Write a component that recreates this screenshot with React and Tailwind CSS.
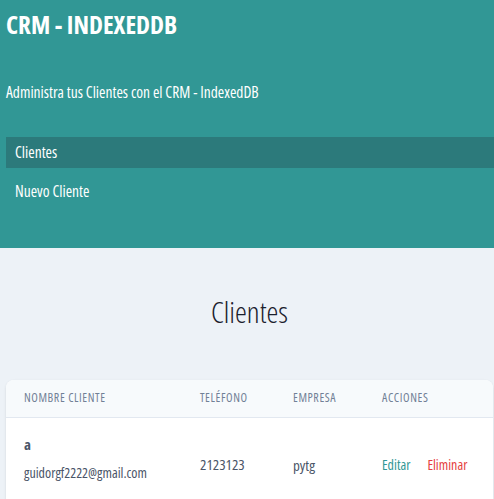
export default function App() {
  return (
    <div className="min-h-[499px] bg-[#edf2f7] font-['Open_Sans',sans-serif] [font-stretch:75%] text-[#2d3748]">
      <aside className="bg-[#319795] pl-[6px] pt-[10px] h-[248px]">
        <h1 className="text-[25px] font-bold text-white leading-[28px]">CRM - INDEXEDDB</h1>
        <p className="mt-[45px] text-[15.5px] text-white leading-[18px]">Administra tus Clientes con el CRM - IndexedDB</p>
        <nav className="mt-[36px] flex flex-col">
          <a className="h-[31px] flex items-center bg-[#2c7a7b] pl-[9px] text-[15.5px] text-white">Clientes</a>
          <a className="h-[31px] mt-[8px] flex items-center pl-[9px] text-[15.5px] text-white">Nuevo Cliente</a>
        </nav>
      </aside>
      <main className="pl-[6px] pr-[1px]">
        <h2 className="text-center text-[30px] font-light leading-[36px] mt-[46px] text-[#1a202c]">Clientes</h2>
        <div className="mt-[50px] bg-white rounded-t-lg shadow-sm overflow-hidden">
          <table className="w-full text-left">
            <thead>
              <tr className="bg-[#f7fafc] h-[37px] border-b border-[#e2e8f0] text-[12px] uppercase tracking-wider text-[#718096]">
                <th className="font-normal pl-[18px] w-[194px]">Nombre Cliente</th>
                <th className="font-normal w-[93px]">Teléfono</th>
                <th className="font-normal w-[89px]">Empresa</th>
                <th className="font-normal">Acciones</th>
              </tr>
            </thead>
            <tbody>
              <tr className="h-[82px] align-top">
                <td className="pl-[18px] pt-[17px]">
                  <p className="text-[15px] font-bold text-[#4a5568] leading-[18px]">a</p>
                  <p className="mt-[11px] text-[14px] text-[#4a5568] leading-[18px]">guidorgf2222@gmail.com</p>
                </td>
                <td className="pt-[36px] text-[15px] leading-[20px] text-[#4a5568]">2123123</td>
                <td className="pt-[37px] text-[15px] leading-[20px] text-[#4a5568]">pytg</td>
                <td className="pt-[37px] text-[14px] leading-[20px]">
                  <span className="text-[#319795] mr-[17px]">Editar</span>
                  <span className="text-[#e53e3e]">Eliminar</span>
                </td>
              </tr>
            </tbody>
          </table>
        </div>
      </main>
    </div>
  );
}
